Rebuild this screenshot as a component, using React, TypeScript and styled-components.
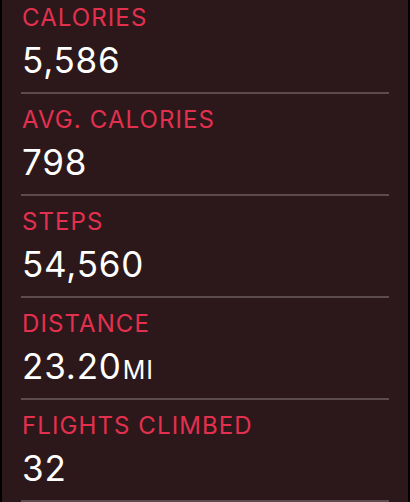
import React from 'react'
import styled, { createGlobalStyle } from 'styled-components'

const GlobalStyle = createGlobalStyle`
  html, body {
    margin: 0;
    padding: 0;
    background: #000;
    overflow: hidden;
  }
  body {
    font-family: Inter, 'Liberation Sans', sans-serif;
    -webkit-font-smoothing: antialiased;
  }
`

type Stat = {
  label: string
  value: string
  unit?: string
}

const stats: Stat[] = [
  { label: 'CALORIES', value: '5,586' },
  { label: 'AVG. CALORIES', value: '798' },
  { label: 'STEPS', value: '54,560' },
  { label: 'DISTANCE', value: '23.20', unit: 'MI' },
  { label: 'FLIGHTS CLIMBED', value: '32' },
]

const Screen = styled.main`
  height: 502px;
  margin: 0 2px;
  background: #2c181a;
  overflow: hidden;
`

const List = styled.ul`
  list-style: none;
  margin: -8px 0 0;
  padding: 0;
`

const Row = styled.li`
  box-sizing: border-box;
  height: 102px;
  margin: 0 19px;
  padding: 12px 0 0 1px;
  border-bottom: 2px solid #5c4b4d;
`

const Label = styled.div`
  font-size: 24px;
  line-height: 28px;
  color: #e4304f;
  letter-spacing: 1.1px;
`

const Value = styled.div`
  margin-top: 8px;
  font-size: 35px;
  line-height: 40px;
  color: #fff;
  letter-spacing: 0.8px;
`

const Unit = styled.span`
  font-size: 25px;
  letter-spacing: 1px;
  margin-left: 1px;
`

export default function App() {
  return (
    <>
      <GlobalStyle />
      <Screen>
        <List>
          {stats.map((s) => (
            <Row key={s.label}>
              <Label>{s.label}</Label>
              <Value>
                {s.value}
                {s.unit && <Unit>{s.unit}</Unit>}
              </Value>
            </Row>
          ))}
        </List>
      </Screen>
    </>
  )
}
